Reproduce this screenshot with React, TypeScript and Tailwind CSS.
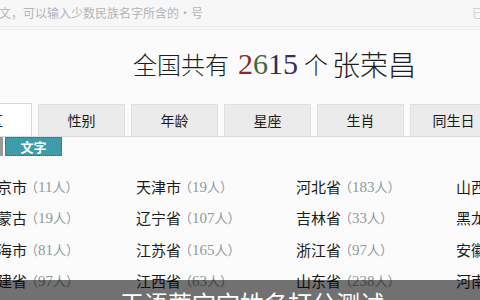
import React from 'react';

const cjk = { fontFamily: '"Noto Sans CJK SC", "Noto Sans", sans-serif' };

const tabs = ['地区', '性别', '年龄', '星座', '生肖', '同生日'];

const rows: [string, number][][] = [
  [['北京市', 11], ['天津市', 19], ['河北省', 183], ['山西省', 52]],
  [['内蒙古', 19], ['辽宁省', 107], ['吉林省', 33], ['黑龙江省', 41]],
  [['上海市', 81], ['江苏省', 165], ['浙江省', 97], ['安徽省', 88]],
  [['福建省', 97], ['江西省', 63], ['山东省', 238], ['河南省', 210]],
];

const colWidths = ['w-[154px]', 'w-[160px]', 'w-[160px]', 'w-[160px]'];

const App: React.FC = () => {
  return (
    <div className="relative w-[480px] h-[300px] overflow-hidden bg-[#fbfbfb]" style={cjk}>
      {/* search hint bar */}
      <div className="h-[27px] bg-[#f7f7f7] flex items-center justify-between text-[12px] text-[#b4b4b4] border-b border-[#e9e9e9]">
        <span className="-ml-[1px] whitespace-nowrap">文，可以输入少数民族名字所含的·号</span>
        <span className="mr-[-4px] text-[#d0d0d0]">已</span>
      </div>
      <div className="h-[3px] border-b border-[#ececec] bg-[#f9f9f9]" />

      {/* title */}
      <div className="h-[74px] flex items-center pl-[133px] pb-[6px] text-[24px] font-light text-[#1e1e1e] whitespace-nowrap">
        <span>全国共有</span>
        <span className="ml-[9px] mr-[6px] text-[30px] leading-none font-normal" style={{ fontFamily: '"Liberation Serif", serif' }}>
          <span className="text-[#8e2b2b]">2</span>
          <span className="text-[#3d6b3a]">6</span>
          <span className="text-[#2b2b5e]">1</span>
          <span className="text-[#3a2c5c]">5</span>
        </span>
        <span>个</span>
        <span className="ml-[4px] text-[28px]">张荣昌</span>
      </div>

      {/* tabs */}
      <div className="flex gap-[6px] ml-[-54px] border-b border-[#dcdcdc] h-[33px] items-end">
        {tabs.map((t, i) => (
          <div
            key={t}
            className={
              i === 0
                ? 'w-[86px] h-[33px] shrink-0 flex items-center justify-center bg-white border border-b-0 border-[#d8d8d8] text-[14px] text-[#1a1a1a]'
                : 'w-[87px] h-[32px] shrink-0 flex items-center justify-center bg-[#ebebeb] border border-[#e0e0e0] border-b-0 text-[14px] text-[#1a1a1a]'
            }
          >
            {t}
          </div>
        ))}
      </div>

      {/* sub tabs */}
      <div className="flex gap-[2px] ml-[-52px]">
        <div className="w-[55px] h-[19px] bg-[#9a9a9a] text-white text-[13px] font-bold flex items-center justify-center">姓名</div>
        <div className="w-[57px] h-[19px] bg-[#3d9ca8] border border-dotted border-[#2a6a74] text-white text-[13px] font-bold flex items-center justify-center">
          文字
        </div>
      </div>

      {/* list */}
      <div className="mt-[15px] ml-[-18px]">
        {rows.map((row, r) => (
          <div key={r} className="flex h-[31.5px] items-center">
            {row.map(([name, n], c) => (
              <div key={name} className={`${colWidths[c]} shrink-0 flex items-center whitespace-nowrap`}>
                <span className="text-[15px] text-[#1c1c1c]">{name}</span>
                <span className="text-[13px] text-[#8d9a9a] -ml-[2px]">
                  （<span style={{ fontFamily: '"Liberation Serif", serif' }} className="text-[15px]">{n}</span>人）
                </span>
              </div>
            ))}
          </div>
        ))}
      </div>

      {/* caption overlay */}
      <div className="absolute left-0 right-0 bottom-0 h-[20px] bg-black/55 overflow-hidden">
        <div className="pl-[120px] pt-[11px] text-[24px] leading-none text-white whitespace-nowrap">王语萱宝宝姓名打分测试</div>
      </div>
    </div>
  );
};

export default App;
